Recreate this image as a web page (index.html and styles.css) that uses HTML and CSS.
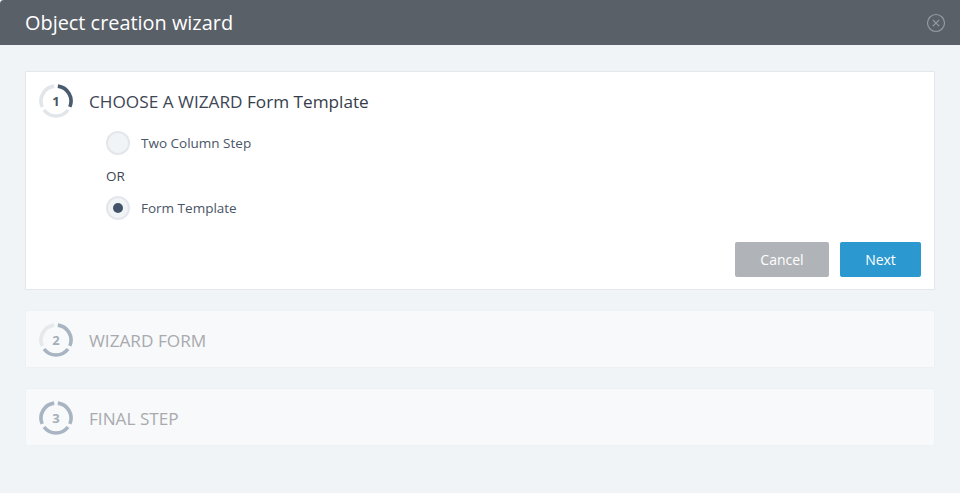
FILE: index.html
```html
<!DOCTYPE html>
<html>
<head>
<meta charset="utf-8">
<link rel="stylesheet" href="styles.css">
</head>
<body>
<div class="modal">
  <div class="modal-header">
    <h1 class="modal-title">Object creation wizard</h1>
    <svg class="close" width="20" height="20" viewBox="0 0 20 20">
      <circle cx="10" cy="10" r="8.5" fill="none" stroke="#959ba2" stroke-width="1.2"/>
      <path d="M6.8 6.8 L13.2 13.2 M13.2 6.8 L6.8 13.2" stroke="#959ba2" stroke-width="1.2" fill="none"/>
    </svg>
  </div>
  <div class="modal-body">
    <div class="step active">
      <div class="step-head">
        <svg class="step-ring" width="36" height="36" viewBox="0 0 36 36">
          <path d="M19.83 3.11 A15 15 0 0 1 31.81 23.86" stroke="#4a5b70" stroke-width="3.6" fill="none"/>
          <path d="M29.98 27.03 A15 15 0 0 1 6.02 27.03" stroke="#e2e6ea" stroke-width="3.6" fill="none"/>
          <path d="M4.19 23.86 A15 15 0 0 1 16.17 3.11" stroke="#e2e6ea" stroke-width="3.6" fill="none"/>
          <text x="18" y="23" text-anchor="middle" class="ring-num dark">1</text>
        </svg>
        <div class="step-title">CHOOSE A WIZARD <span class="strong">Form Template</span></div>
      </div>
      <div class="step-content">
        <label class="radio-row"><span class="radio"></span><span class="radio-label">Two Column Step</span></label>
        <div class="or">OR</div>
        <label class="radio-row"><span class="radio checked"></span><span class="radio-label">Form Template</span></label>
      </div>
      <div class="actions">
        <button class="btn btn-cancel">Cancel</button>
        <button class="btn btn-next">Next</button>
      </div>
    </div>
    <div class="step inactive">
      <div class="step-head">
        <svg class="step-ring" width="36" height="36" viewBox="0 0 36 36">
          <path d="M19.83 3.11 A15 15 0 0 1 31.81 23.86" stroke="#a8b4c1" stroke-width="3.6" fill="none"/>
          <path d="M29.98 27.03 A15 15 0 0 1 6.02 27.03" stroke="#a8b4c1" stroke-width="3.6" fill="none"/>
          <path d="M4.19 23.86 A15 15 0 0 1 16.17 3.11" stroke="#e6e9ec" stroke-width="3.6" fill="none"/>
          <text x="18" y="23" text-anchor="middle" class="ring-num light">2</text>
        </svg>
        <div class="step-title muted">WIZARD FORM</div>
      </div>
    </div>
    <div class="step inactive">
      <div class="step-head">
        <svg class="step-ring" width="36" height="36" viewBox="0 0 36 36">
          <path d="M19.83 3.11 A15 15 0 0 1 31.81 23.86" stroke="#a8b4c1" stroke-width="3.6" fill="none"/>
          <path d="M29.98 27.03 A15 15 0 0 1 6.02 27.03" stroke="#a8b4c1" stroke-width="3.6" fill="none"/>
          <path d="M4.19 23.86 A15 15 0 0 1 16.17 3.11" stroke="#a8b4c1" stroke-width="3.6" fill="none"/>
          <text x="18" y="23" text-anchor="middle" class="ring-num light">3</text>
        </svg>
        <div class="step-title muted">FINAL STEP</div>
      </div>
    </div>
  </div>
</div>
</body>
</html>
```
FILE: styles.css
```css
* { box-sizing: border-box; }
html, body { margin: 0; padding: 0; }
body {
  width: 960px;
  height: 493px;
  overflow: hidden;
  font-family: "Open Sans", "Liberation Sans", sans-serif;
  background: #f1f4f7;
}
.modal { width: 960px; height: 493px; background: #f1f4f7; }
.modal-header {
  height: 45px;
  background: #5a6067;
  display: flex;
  align-items: center;
  justify-content: space-between;
  padding: 0 14px 0 25px;
  border-top-left-radius: 4px;
}
.modal-title {
  margin: 0;
  color: #ffffff;
  font-size: 19.9px;
  font-weight: 400;
}
.close { display: block; }
.modal-body {
  padding: 26px 25px 0 25px;
  display: flex;
  flex-direction: column;
  gap: 20px;
}
.step {
  border: 1px solid #e4e8ec;
  padding: 11px 13px 9px 12px;
}
.step.active { background: #ffffff; padding-bottom: 12px; }
.step.inactive { background: #f7f9fb; border-color: #eef1f4; }
.step-head {
  display: flex;
  align-items: center;
  height: 36px;
  gap: 15px;
}
.step-ring { display: block; flex: none; }
.ring-num { font-family: "Open Sans", "Liberation Sans", sans-serif; font-size: 13px; font-weight: 700; }
.ring-num.dark { fill: #4b5563; }
.ring-num.light { fill: #a6aeb8; }
.step-title {
  font-size: 17.2px;
  color: #3e4654;
}
.step-title .strong { font-weight: 500; color: #353d4a; }
.step-title.muted { color: #a9aaad; }
.step-content {
  margin-left: 68px;
  padding-top: 12px;
  display: flex;
  flex-direction: column;
}
.radio-row {
  display: flex;
  align-items: center;
  gap: 11px;
  height: 24px;
}
.radio {
  width: 24px;
  height: 24px;
  border-radius: 50%;
  background: #f1f4f7;
  border: 2px solid #e3e7eb;
  display: flex;
  align-items: center;
  justify-content: center;
}
.radio.checked::after {
  content: "";
  width: 10px;
  height: 10px;
  border-radius: 50%;
  background: #43546a;
}
.radio-label { font-size: 13.5px; color: #4a5566; }
.or {
  font-size: 13.5px;
  color: #3e4654;
  padding: 15px 0 13px 0;
  line-height: 13px;
}
.actions {
  display: flex;
  justify-content: flex-end;
  gap: 11px;
  margin-top: 22px;
}
.btn {
  height: 35px;
  border: none;
  border-radius: 2px;
  color: #ffffff;
  font-family: "Open Sans", "Liberation Sans", sans-serif;
  font-size: 14px;
}
.btn-cancel { width: 94px; background: #b0b4b8; }
.btn-next { width: 81px; background: #2b98cf; }
```
